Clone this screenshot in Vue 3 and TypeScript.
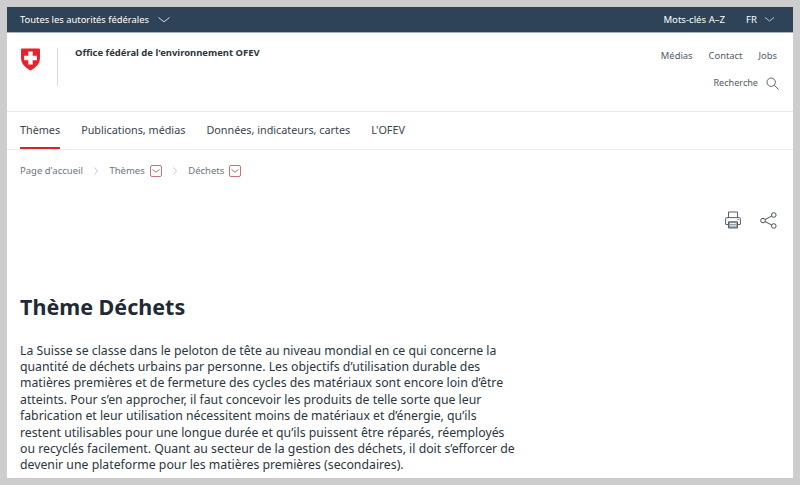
<template>
  <div class="frame">
    <div class="page">
      <!-- bandeau fédéral -->
      <div class="topbar">
        <div class="topbar-left">
          <span>Toutes les autorités fédérales</span>
          <svg class="chev" width="12" height="6" viewBox="0 0 12 6"><path d="M0.5 0.5 L6 4.8 L11.5 0.5" /></svg>
        </div>
        <div class="topbar-right">
          <span>Mots-clés A–Z</span>
          <span class="lang">FR</span>
          <svg class="chev" width="11" height="5" viewBox="0 0 12 6"><path d="M0.5 0.5 L6 4.8 L11.5 0.5" /></svg>
        </div>
      </div>

      <header class="head">
        <div class="brand">
          <svg class="shield" width="21" height="23" viewBox="0 0 21 23">
            <path d="M1 1.5 Q1 0.5 2 0.5 H19 Q20 0.5 20 1.5 V10 Q20 17.5 10.5 22.5 Q1 17.5 1 10 Z" fill="#e8212b" />
            <path d="M8.3 3.6 H12.7 V7.8 H16.9 V12.2 H12.7 V16.4 H8.3 V12.2 H4.1 V7.8 H8.3 Z" fill="#fff" />
          </svg>
          <div class="sep"></div>
          <div class="office">Office fédéral de l'environnement OFEV</div>
        </div>
        <div class="service">
          <div class="service-links">
            <a>Médias</a>
            <a>Contact</a>
            <a>Jobs</a>
          </div>
          <div class="search">
            <span>Recherche</span>
            <svg width="13" height="13" viewBox="0 0 13 13" fill="none" stroke="#5b6670" stroke-width="1">
              <circle cx="5.2" cy="5.2" r="4.2" />
              <path d="M8.3 8.3 L12.5 12.5" />
            </svg>
          </div>
        </div>
      </header>

      <nav class="mainnav">
        <a v-for="item in navItems" :key="item" :class="{ active: item === 'Thèmes' }">{{ item }}</a>
      </nav>

      <div class="crumbs">
        <template v-for="(c, i) in crumbs" :key="c.label">
          <svg v-if="i > 0" class="crumb-sep" width="4" height="8" viewBox="0 0 4 8"><path d="M0.5 0.5 L3.5 4 L0.5 7.5" /></svg>
          <span class="crumb">{{ c.label }}</span>
          <span v-if="c.menu" class="crumb-btn">
            <svg width="8" height="4" viewBox="0 0 8 4"><path d="M0.5 0.5 L4 3.2 L7.5 0.5" /></svg>
          </span>
        </template>
      </div>

      <div class="tools">
        <svg width="16" height="18" viewBox="0 0 16 18" fill="none" stroke="#55606a" stroke-width="1">
          <path d="M3.5 7 V1 H12.5 V7" />
          <path d="M3 13.5 H1 Q0.6 13.5 0.6 13 V7.8 Q0.6 6.6 1.8 6.6 H14.2 Q15.4 6.6 15.4 7.8 V13 Q15.4 13.5 15 13.5 H13" />
          <path d="M3.5 10.8 H12.5 V17 H3.5 Z" fill="#9aa1a8" />
          <path d="M5 12.5 H11 M5 14.8 H11" stroke="#fff" stroke-width="0.8" />
          <path d="M12.5 8.6 H13.8" />
        </svg>
        <svg width="17" height="17" viewBox="0 0 17 17" fill="none" stroke="#4a545e" stroke-width="1">
          <circle cx="13.8" cy="3" r="2.3" />
          <circle cx="3" cy="8.6" r="2.3" />
          <circle cx="13.8" cy="14" r="2.3" />
          <path d="M5 7.5 L11.8 4 M5 9.6 L11.8 13" />
        </svg>
      </div>

      <main class="content">
        <h1>Thème Déchets</h1>
        <p>La Suisse se classe dans le peloton de tête au niveau mondial en ce qui concerne la quantité de déchets urbains par personne. Les objectifs d’utilisation durable des matières premières et de fermeture des cycles des matériaux sont encore loin d’être atteints. Pour s’en approcher, il faut concevoir les produits de telle sorte que leur fabrication et leur utilisation nécessitent moins de matériaux et d’énergie, qu’ils restent utilisables pour une longue durée et qu’ils puissent être réparés, réemployés ou recyclés facilement. Quant au secteur de la gestion des déchets, il doit s’efforcer de devenir une plateforme pour les matières premières (secondaires).</p>
      </main>
    </div>
  </div>
</template>

<script setup lang="ts">
const navItems: string[] = ['Thèmes', 'Publications, médias', 'Données, indicateurs, cartes', "L'OFEV"]

const crumbs: { label: string; menu: boolean }[] = [
  { label: "Page d'accueil", menu: false },
  { label: 'Thèmes', menu: true },
  { label: 'Déchets', menu: true }
]
</script>

<style>
html, body { margin: 0; background: #cdcdcd; }
</style>

<style scoped>
.frame {
  height: 485px;
  box-sizing: border-box;
  padding: 7px;
  overflow: hidden;
  font-family: "Noto Sans", sans-serif;
  color: #2b3640;
}
.page { height: 471px; background: #fff; overflow: hidden; }

.topbar {
  height: 25px;
  background: #2e4358;
  border-bottom: 1px solid #a9b2ba;
  color: #fff;
  font-size: 9.4px;
  display: flex;
  justify-content: space-between;
  align-items: center;
  padding: 0 18px 0 13px;
}
.topbar-left { display: flex; align-items: center; gap: 9px; }
.topbar-right { display: flex; align-items: center; font-size: 9.6px; }
.lang { margin-left: 21px; margin-right: 7px; }
.chev { fill: none; stroke: #d5dce2; stroke-width: 1; }

.head {
  height: 78px;
  border-bottom: 1px solid #e9e9e9;
  display: flex;
  justify-content: space-between;
  padding: 0 16px 0 13px;
}
.brand { display: flex; align-items: flex-start; padding-top: 15px; }
.sep { width: 1px; height: 38px; background: #dcdcdc; margin-left: 16px; }
.office {
  margin-left: 17px;
  margin-top: -1px;
  font-size: 9.45px;
  font-weight: 700;
  line-height: 12px;
  color: #2b3640;
}
.service { display: flex; flex-direction: column; align-items: flex-end; padding-top: 16px; font-size: 9.4px; color: #4f5a64; }
.service-links { display: flex; gap: 16px; line-height: 14px; }
.search { display: flex; align-items: center; gap: 8px; margin-top: 13px; margin-right: -2px; line-height: 14px; font-size: 9.1px; }

.mainnav {
  height: 37px;
  border-bottom: 1px solid #ececec;
  display: flex;
  gap: 21px;
  padding-left: 13px;
  font-size: 10.8px;
  color: #3a444e;
}
.mainnav a { line-height: 36px; height: 37px; box-sizing: border-box; }
.mainnav a.active { border-bottom: 2px solid #d8232a; }

.crumbs {
  display: flex;
  align-items: center;
  padding: 14px 0 0 13px;
  font-size: 9.5px;
  line-height: 14px;
  color: #6b757e;
}
.crumb-sep { fill: none; stroke: #b5bbc1; stroke-width: 0.8; margin: 0 11.5px 0 11px; }
.crumb-btn {
  width: 10px;
  height: 10px;
  margin-left: 5px;
  border: 1px solid #c9727a;
  border-radius: 2px;
  display: flex;
  align-items: center;
  justify-content: center;
}
.crumb-btn svg { fill: none; stroke: #c9505a; stroke-width: 0.9; }

.tools { display: flex; justify-content: flex-end; gap: 19px; padding: 33px 16px 0 0; align-items: center; }

.content { padding: 64px 0 0 13px; width: 497px; }
h1 { margin: 0; font-size: 21.5px; line-height: 28px; font-weight: 700; color: #1f2a35; }
p { margin: 21.5px 0 0; font-size: 12.27px; line-height: 16.4px; color: #2b3640; }
</style>
